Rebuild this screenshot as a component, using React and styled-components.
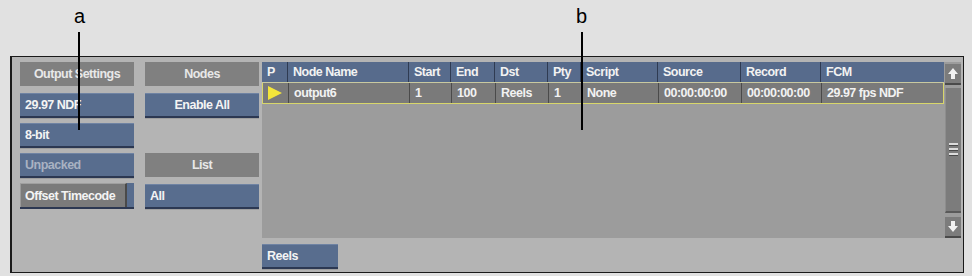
import React from 'react';
import styled, { createGlobalStyle } from 'styled-components';

const columns = [
  { key: 'p', label: 'P', width: 26 },
  { key: 'name', label: 'Node Name', width: 121 },
  { key: 'start', label: 'Start', width: 42 },
  { key: 'end', label: 'End', width: 44 },
  { key: 'dst', label: 'Dst', width: 53 },
  { key: 'pty', label: 'Pty', width: 33 },
  { key: 'script', label: 'Script', width: 77 },
  { key: 'source', label: 'Source', width: 83 },
  { key: 'record', label: 'Record', width: 80 },
  { key: 'fcm', label: 'FCM', width: 123 },
];

const rows = [
  {
    name: 'output6', start: '1', end: '100', dst: 'Reels', pty: '1',
    script: 'None', source: '00:00:00:00', record: '00:00:00:00', fcm: '29.97 fps NDF',
  },
];

const gridCols = columns.map(c => `${c.width}px`).join(' ');

const GlobalStyle = createGlobalStyle`
  html, body {
    margin: 0;
    padding: 0;
    background: #e1e1e1;
  }
  body {
    font-family: "Liberation Sans", Arial, sans-serif;
  }
`;

const App = () => {
  return (
    <Page>
      <GlobalStyle />
      <Callout left={74} lineLeft={78} lineBottom={130}>a</Callout>
      <Callout left={576} lineLeft={581} lineBottom={130}>b</Callout>
      <Panel>
        <Column>
          <Header>Output Settings</Header>
          <Button>29.97 NDF</Button>
          <Button>8-bit</Button>
          <Button disabled>Unpacked</Button>
          <Toggle>
            <ToggleFace>Offset Timecode</ToggleFace>
          </Toggle>
        </Column>
        <Column>
          <Header>Nodes</Header>
          <Button center>Enable All</Button>
          <Spacer />
          <Header>List</Header>
          <Button>All</Button>
        </Column>
        <TableArea>
          <TableBox>
            <Table>
              <HeadRow>
                {columns.map(c => (
                  <HeadCell key={c.key}>{c.label}</HeadCell>
                ))}
              </HeadRow>
              {rows.map((row, i) => (
                <DataRow key={i}>
                  <Cell>
                    <Play />
                  </Cell>
                  {columns.slice(1).map(c => (
                    <Cell key={c.key}>{row[c.key]}</Cell>
                  ))}
                </DataRow>
              ))}
            </Table>
            <Scrollbar>
              <ScrollButton>
                <svg width="10" height="11" viewBox="0 0 10 11">
                  <path d="M5 0 L10 6 L7 6 L7 11 L3 11 L3 6 L0 6 Z" fill="#f2f2f2" />
                </svg>
              </ScrollButton>
              <Track>
                <Grip>
                  <span /><span /><span />
                </Grip>
              </Track>
              <ScrollButton down>
                <svg width="10" height="11" viewBox="0 0 10 11">
                  <path d="M5 11 L10 5 L7 5 L7 0 L3 0 L3 5 L0 5 Z" fill="#f2f2f2" />
                </svg>
              </ScrollButton>
            </Scrollbar>
          </TableBox>
          <Button narrow>Reels</Button>
        </TableArea>
      </Panel>
    </Page>
  );
};

const Page = styled.div`
  position: relative;
  width: 972px;
  height: 276px;
  padding: 56px 0 0 10px;
  box-sizing: border-box;
  overflow: hidden;
`;

const Callout = styled.div`
  position: absolute;
  top: 6px;
  left: ${props => props.left}px;
  font-size: 20px;
  line-height: 20px;
  color: #000;
  z-index: 2;

  &::after {
    content: '';
    position: absolute;
    top: 26px;
    left: ${props => props.lineLeft - props.left}px;
    width: 2px;
    height: ${props => props.lineBottom - 32}px;
    background: #000;
  }
`;

const Panel = styled.div`
  width: 954px;
  height: 217px;
  box-sizing: border-box;
  background: #b4b4b4;
  border: 1px solid #1a1a1a;
  border-left: 2px solid #1a1a1a;
  display: flex;
  padding: 5px 0 0 8px;
  gap: 11px;
`;

const Column = styled.div`
  width: 114px;
  display: flex;
  flex-direction: column;
  gap: 5px;
`;

const label = `
  font-size: 12.5px;
  font-weight: bold;
  letter-spacing: -0.5px;
`;

const Header = styled.div`
  height: 24px;
  margin-bottom: 2px;
  background: #808080;
  color: #e8e8e8;
  ${label}
  display: flex;
  align-items: center;
  justify-content: center;
`;

const Button = styled.div`
  height: 25px;
  width: ${props => props.narrow ? '76px' : 'auto'};
  box-sizing: border-box;
  background: #586d8e;
  border-top: 1px solid #6f83a3;
  border-bottom: 2px solid #2c3852;
  color: ${props => props.disabled ? '#a9b2c2' : '#f4f4f4'};
  ${label}
  display: flex;
  align-items: center;
  justify-content: ${props => props.center ? 'center' : 'flex-start'};
  padding: 0 5px;
  box-shadow: 0 1px 0 rgba(40, 40, 40, 0.15);
`;

const Toggle = styled.div`
  height: 26px;
  box-sizing: border-box;
  background: #586d8e;
  border-bottom: 2px solid #2c3852;
  display: flex;
`;

const ToggleFace = styled.div`
  width: 107px;
  box-sizing: border-box;
  background: #7b7b7b;
  border-top: 1px solid #a0a0a0;
  border-left: 1px solid #9a9a9a;
  border-right: 2px solid #4a4a4a;
  color: #f4f4f4;
  ${label}
  display: flex;
  align-items: center;
  padding: 0 4px;
  white-space: nowrap;
`;

const Spacer = styled.div`
  height: 25px;
`;

const TableArea = styled.div`
  margin-left: -8px;
  display: flex;
  flex-direction: column;
  gap: 6px;
`;

const TableBox = styled.div`
  width: 699px;
  height: 176px;
  background: #9c9c9c;
  display: flex;
  gap: 1px;
`;

const Table = styled.div`
  width: 682px;
`;

const HeadRow = styled.div`
  display: grid;
  grid-template-columns: ${gridCols};
  height: 21px;
  background: #576b8c;
  border-bottom: 1px solid #c9c9a0;
  box-sizing: border-box;
`;

const HeadCell = styled.div`
  border-right: 1px solid #2f3b52;
  color: #f2f2f2;
  ${label}
  display: flex;
  align-items: center;
  padding-left: 5px;
  white-space: nowrap;
  overflow: hidden;

  &:last-child {
    border-right: none;
  }
`;

const DataRow = styled.div`
  display: grid;
  grid-template-columns: ${gridCols};
  height: 21px;
  background: #7a7a7a;
  border: 1px solid #d8d66a;
  border-top: none;
  box-sizing: border-box;
`;

const Cell = styled.div`
  border-right: 1px solid #4a4a4a;
  color: #f2f2f2;
  ${label}
  display: flex;
  align-items: center;
  padding-left: 5px;
  white-space: nowrap;

  &:last-child {
    border-right: none;
  }
`;

const Play = styled.span`
  width: 0;
  height: 0;
  border-top: 7px solid transparent;
  border-bottom: 7px solid transparent;
  border-left: 14px solid #f3e53a;
`;

const Scrollbar = styled.div`
  width: 16px;
  display: flex;
  flex-direction: column;
  padding-top: 1px;
`;

const ScrollButton = styled.div`
  height: 22px;
  box-sizing: border-box;
  background: #7c7c7c;
  border-top: 1px solid #9c9c9c;
  border-bottom: 2px solid #4a4a4a;
  display: flex;
  align-items: center;
  justify-content: center;
  margin-top: ${props => props.down ? '3px' : '0'};
`;

const Track = styled.div`
  flex: 1;
  margin-top: 3px;
  background: #7c7c7c;
  border-left: 1px solid #8e8e8e;
  border-bottom: 2px solid #5a5a5a;
  display: flex;
  align-items: center;
  justify-content: center;
`;

const Grip = styled.div`
  display: flex;
  flex-direction: column;
  gap: 2px;

  span {
    display: block;
    width: 9px;
    height: 2px;
    background: #dcdcdc;
    border-bottom: 1px solid #4a4a4a;
  }
`;

export default App;
